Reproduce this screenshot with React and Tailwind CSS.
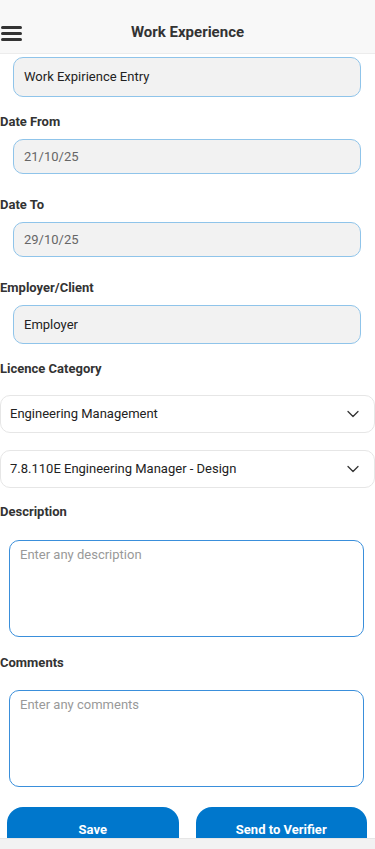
import React from 'react';
import { ChevronDown } from 'lucide-react';

const font = { fontFamily: 'Roboto, "Liberation Sans", sans-serif' };

const Label = ({ children, className = '' }) => (
  <div className={`text-[13px] leading-4 font-bold text-[#333] ${className}`}>{children}</div>
);

const Field = ({ value, muted, className = '' }) => (
  <div
    className={`mx-[13px] mr-[14px] flex items-center rounded-[10px] border border-[#8fc4ea] bg-[#f2f2f2] px-[10px] text-[13px] ${
      muted ? 'text-[#666]' : 'text-[#222]'
    } ${className}`}
  >
    {value}
  </div>
);

const Select = ({ value, className = '' }) => (
  <div
    className={`flex h-[38px] items-center justify-between rounded-[10px] border border-[#e6e6e6] bg-white pl-[9px] pr-[11px] text-[13px] text-[#222] ${className}`}
  >
    <span>{value}</span>
    <ChevronDown size={20} strokeWidth={1.5} className="text-[#333]" />
  </div>
);

const Area = ({ placeholder, className = '' }) => (
  <div
    className={`ml-[9px] mr-[11px] h-[97px] rounded-[10px] border border-[#3a8fdb] px-[10px] pt-[4px] text-[13px] text-[#999] ${className}`}
  >
    {placeholder}
  </div>
);

export default function App() {
  return (
    <div className="flex h-[849px] w-[375px] flex-col overflow-hidden bg-white" style={font}>
      {/* header */}
      <div className="relative flex h-[54px] shrink-0 items-center justify-center border-b border-[#ececec] bg-[#f8f8f8] pt-[12px]">
        <div className="absolute left-[1px] top-[26px] flex flex-col gap-[3px]">
          <span className="block h-[3px] w-[21px] rounded-full bg-[#333]" />
          <span className="block h-[3px] w-[21px] rounded-full bg-[#333]" />
          <span className="block h-[3px] w-[21px] rounded-full bg-[#333]" />
        </div>
        <h1 className="text-[15px] font-bold text-[#333]">Work Experience</h1>
      </div>

      {/* form */}
      <div className="flex-1 overflow-hidden">
        <Field value="Work Expirience Entry" className="mt-[3px] h-[40px]" />

        <Label className="mt-[17px]">Date From</Label>
        <Field value="21/10/25" muted className="mt-[9px] h-[35px]" />

        <Label className="mt-[23px]">Date To</Label>
        <Field value="29/10/25" muted className="mt-[9px] h-[35px]" />

        <Label className="mt-[23px]">Employer/Client</Label>
        <Field value="Employer" className="mt-[9px] h-[39px]" />

        <Label className="mt-[17px]">Licence Category</Label>
        <Select value="Engineering Management" className="mt-[18px]" />
        <Select value="7.8.110E Engineering Manager - Design" className="mt-[17px]" />

        <Label className="mt-[16px]">Description</Label>
        <Area placeholder="Enter any description" className="mt-[20px]" />

        <Label className="mt-[18px]">Comments</Label>
        <Area placeholder="Enter any comments" className="mt-[19px]" />

        <div className="mt-[20px] flex gap-[17px] pl-[7px] pr-[8px]">
          <button className="h-[46px] flex-1 rounded-[16px] bg-[#0077cc] text-[13px] font-bold text-white">
            Save
          </button>
          <button className="h-[46px] flex-1 rounded-[16px] bg-[#0077cc] text-[13px] font-bold text-white">
            Send to Verifier
          </button>
        </div>
      </div>

      {/* bottom bar */}
      <div className="h-[11px] shrink-0 border-t border-[#e6e6e6] bg-[#f2f2f2]" />
    </div>
  );
}
